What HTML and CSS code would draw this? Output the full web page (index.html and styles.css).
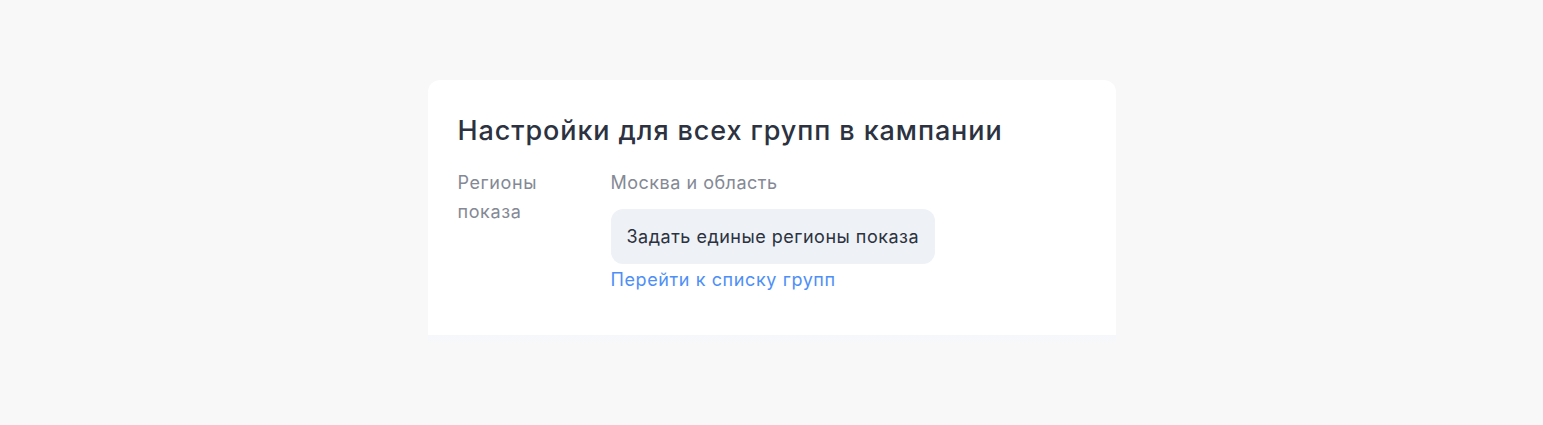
FILE: index.html
```html
<!DOCTYPE html>
<html lang="ru">
    <head>
        <meta charset="UTF-8">
        <meta name="viewport" content="width=device-width, initial-scale=1.0">
        <title>Настройки кампании</title>
        <link rel="stylesheet" href="styles.css">
    </head>
    <body>
        <div class="card">
            <h2 class="card-title">Настройки для всех групп в кампании</h2>
            <div class="setting-row">
                <div class="setting-label">Регионы показа</div>
                <div class="setting-value">
                    <div class="value-text">Москва и область</div>
                    <button type="button" class="btn-secondary">Задать единые регионы показа</button>
                    <a href="#" class="link">Перейти к списку групп</a>
                </div>
            </div>
        </div>
        <div class="card-shadow"></div>
    </body>
</html>
```

FILE: styles.css
```css
/* Global */
body {
    font-family: Inter, "Noto Sans", Arial, sans-serif;
    background: #f8f8f8;
    margin: 0;
    padding: 80px 0 0;
}

/* Card */
.card {
    width: 688px;
    margin: 0 auto;
    box-sizing: border-box;
    background: #fff;
    border-radius: 12px 12px 0 0;
    padding: 32px 30px 44px;
}

.card-shadow {
    width: 688px;
    height: 9px;
    margin: 0 auto;
    background: linear-gradient(#f5f7fb, #f8f8f9);
}

.card-title {
    margin: 0 0 18px;
    font-size: 27px;
    line-height: 38px;
    font-weight: 500;
    letter-spacing: 0.9px;
    color: #2c3240;
}

/* Settings */
.setting-row {
    display: flex;
    font-size: 18px;
    letter-spacing: 0.6px;
}

.setting-label {
    width: 153px;
    flex-shrink: 0;
    padding-right: 60px;
    box-sizing: border-box;
    line-height: 29px;
    color: #848995;
}

.setting-value {
    display: flex;
    flex-direction: column;
    align-items: flex-start;
}

.value-text {
    line-height: 29px;
    color: #848995;
    margin-bottom: 12px;
    letter-spacing: 0.5px;
}

.btn-secondary {
    font-family: inherit;
    font-size: inherit;
    letter-spacing: 0.5px;
    line-height: 23px;
    color: #2c3240;
    background: #eef1f6;
    border: none;
    border-radius: 12px;
    padding: 16px 16px;
    cursor: pointer;
}

.link {
    margin-top: 4px;
    line-height: 23px;
    color: #4e8ff7;
    text-decoration: none;
}
```
